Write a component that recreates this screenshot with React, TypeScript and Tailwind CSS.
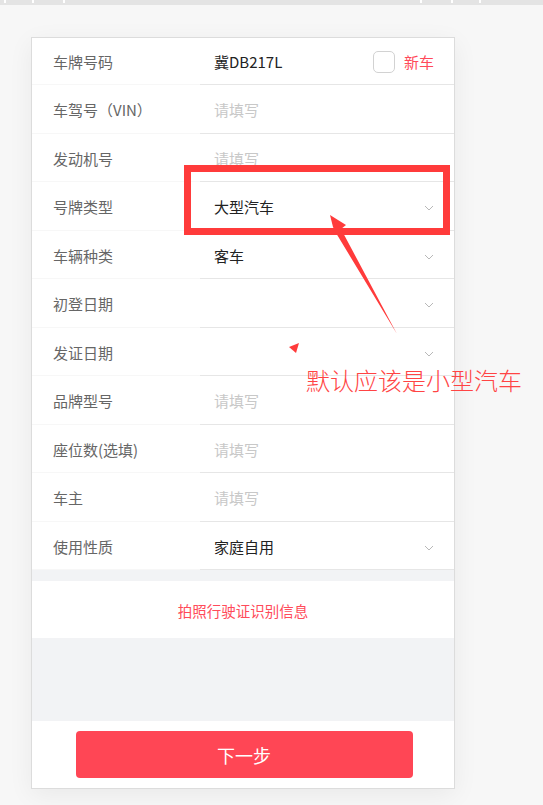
import React from "react";

const Chevron = () => (
  <svg width="10" height="6" viewBox="0 0 10 6" className="mt-[4px] shrink-0">
    <polyline points="1,1 5,5 9,1" fill="none" stroke="#b8b8b8" strokeWidth="1" />
  </svg>
);

type Row = { label: string; value?: string; placeholder?: boolean; select?: boolean };

const rows: Row[] = [
  { label: "车驾号（VIN）", value: "请填写", placeholder: true },
  { label: "发动机号", value: "请填写", placeholder: true },
  { label: "号牌类型", value: "大型汽车", select: true },
  { label: "车辆种类", value: "客车", select: true },
  { label: "初登日期", value: "", select: true },
  { label: "发证日期", value: "", select: true },
  { label: "品牌型号", value: "请填写", placeholder: true },
  { label: "座位数(选填)", value: "请填写", placeholder: true },
  { label: "车主", value: "请填写", placeholder: true },
  { label: "使用性质", value: "家庭自用", select: true },
];

export default function App() {
  return (
    <div
      className="relative min-h-[805px] w-[543px] bg-[#f7f7f7] overflow-hidden"
      style={{ fontFamily: '"Noto Sans CJK SC", "Noto Sans", sans-serif' }}
    >
      {/* top ruler bar */}
      <div className="flex h-[5px] w-full items-start bg-[#e4e4e4]">
        <div className="ml-[4px] h-[3px] w-[2px] bg-white" />
        <div className="ml-[26px] h-[3px] w-[2px] bg-white" />
        <div className="ml-[29px] h-[3px] w-[2px] bg-white" />
        <div className="ml-[355px] h-[3px] w-[2px] bg-white" />
        <div className="ml-[29px] h-[3px] w-[2px] bg-white" />
        <div className="ml-[26px] h-[3px] w-[2px] bg-white" />
      </div>

      {/* card */}
      <div className="ml-[31px] mt-[32px] w-[424px] border border-[#dcdcdc] bg-white shadow-[0_6px_24px_rgba(0,0,0,0.06)]">
        {/* row 1 */}
        <div className="flex h-[47px]">
          <div className="flex w-[168px] items-center border-b border-[#f7f7f7] pl-[21px] pt-[2px] text-[15px] text-[#666]">
            车牌号码
          </div>
          <div className="flex flex-1 items-center border-b border-[#e6e6e6] pl-[14px] pr-[20px] pt-[1px]">
            <span className="flex-1 pt-[1px] text-[15px] text-[#222]">冀DB217L</span>
            <div className="h-[22px] w-[22px] rounded-[5px] border border-[#d2d2d2] bg-white" />
            <span className="ml-[9px] pt-[1px] text-[15px] text-[#ff4a5a]">新车</span>
          </div>
        </div>

        {rows.map((r, i) => (
          <div key={i} className="flex h-[48.5px]">
            <div className="flex w-[168px] items-center border-b border-[#f7f7f7] pl-[21px] pt-[3px] text-[15px] text-[#666]">
              {r.label}
            </div>
            <div className="flex flex-1 items-center border-b border-[#e6e6e6] pl-[14px] pr-[20px] pt-[1px]">
              <span
                className={
                  "flex-1 pt-[2px] text-[15px] " + (r.placeholder ? "text-[#c8c8c8]" : "text-[#222]")
                }
              >
                {r.value}
              </span>
              {r.select && <Chevron />}
            </div>
          </div>
        ))}

        <div className="h-[11px] bg-[#f2f3f5]" />
        <div className="flex h-[57px] items-center justify-center pt-[3px] text-[14.5px] text-[#ff4b5a]">
          拍照行驶证识别信息
        </div>
        <div className="h-[83px] bg-[#f2f3f5]" />
        <div className="flex h-[67px] items-start justify-center pt-[10px]">
          <button className="ml-[2px] flex h-[47px] w-[337px] items-center justify-center rounded-[4px] bg-[#ff4655] pt-[2px] text-[18px] text-white">
            下一步
          </button>
        </div>
      </div>

      {/* annotation overlay */}
      <div className="pointer-events-none absolute left-[184px] top-[165px] h-[70px] w-[266px] border-[7px] border-[#ff3b3b]" />
      <svg className="pointer-events-none absolute left-0 top-0" width="543" height="805">
        <polygon points="330,215 346,225 341,229 397,334 336,233 333,227" fill="#ff3b3b" />
        <polygon points="289,347 299,343 296,353" fill="#ff3b3b" />
      </svg>
      <div className="pointer-events-none absolute left-[306px] top-[368px] text-[24px] font-light leading-none tracking-[0px] text-[#ff4444]">
        默认应该是小型汽车
      </div>
    </div>
  );
}
